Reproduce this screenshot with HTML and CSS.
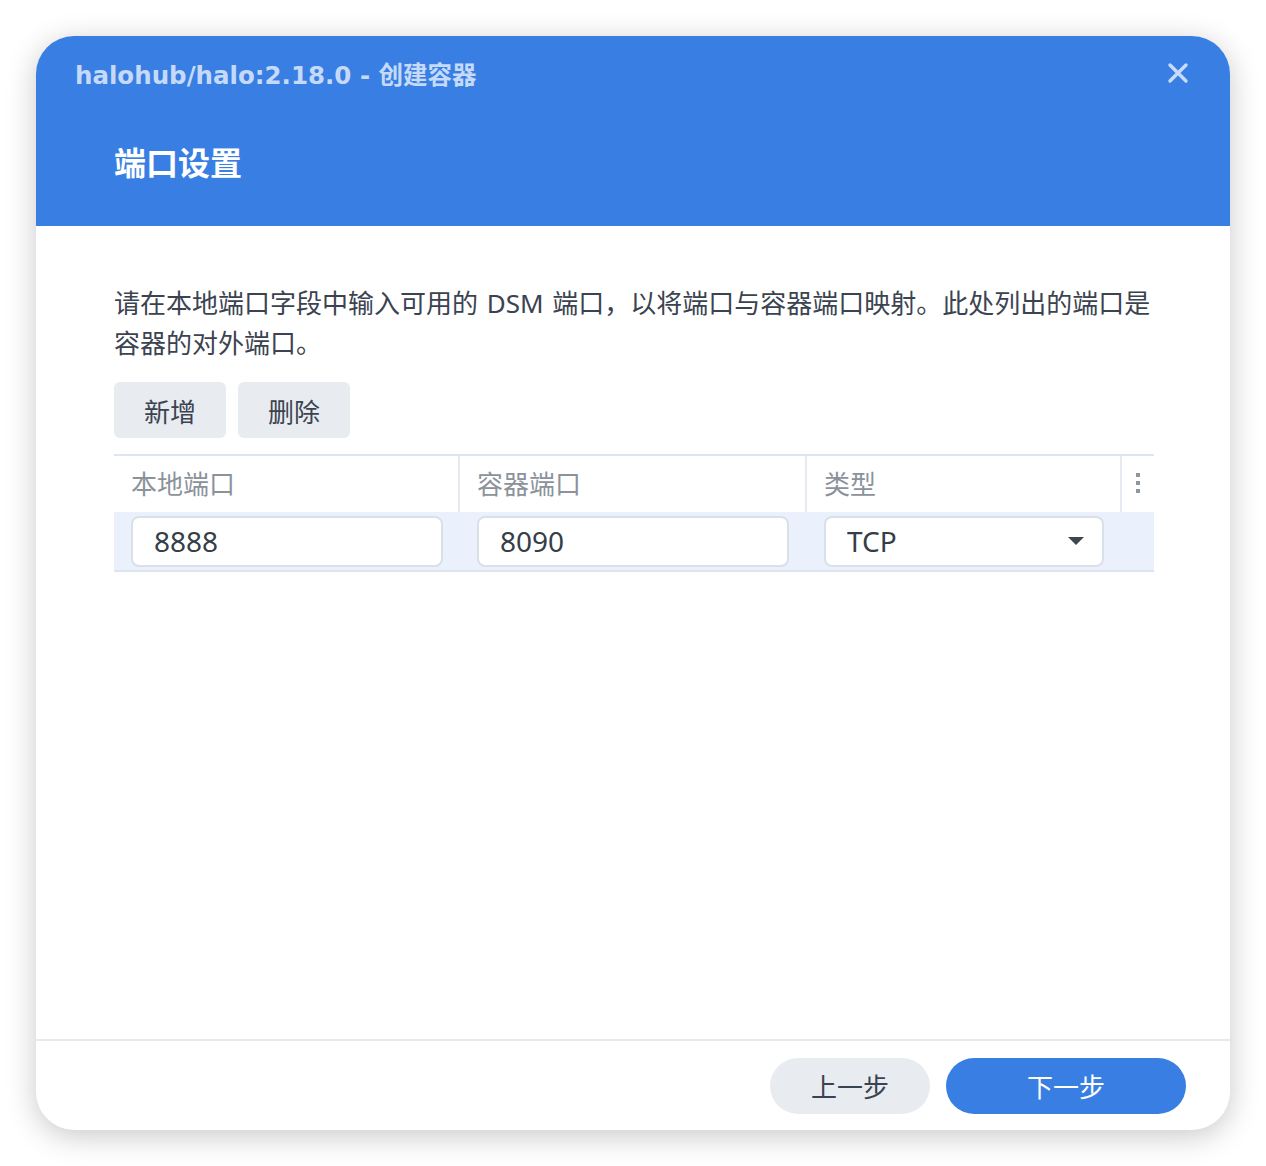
FILE: index.html
```html
<!DOCTYPE html>
<html lang="zh-CN">
<head>
  <meta charset="UTF-8">
  <title>创建容器</title>
  <link rel="stylesheet" href="styles.css">
</head>
<body>

  <div class="dialog">
    <div class="dialog-header">
      <div class="title-bar">
        <span class="title">halohub/halo:2.18.0 - 创建容器</span>
        <span class="close">
          <svg width="22" height="22" viewBox="0 0 22 22">
            <path d="M3 3 L19 19 M19 3 L3 19" stroke="#c8dcf8" stroke-width="3.4" stroke-linecap="round"/>
          </svg>
        </span>
      </div>
      <h1 class="step-title">端口设置</h1>
    </div>

    <div class="dialog-body">
      <p class="desc">请在本地端口字段中输入可用的 DSM 端口，以将端口与容器端口映射。此处列出的端口是容器的对外端口。</p>

      <div class="toolbar">
        <button class="tool-btn">新增</button>
        <button class="tool-btn">删除</button>
      </div>

      <div class="grid">
        <div class="grid-head">
          <div class="col col-local">本地端口</div>
          <div class="col col-container">容器端口</div>
          <div class="col col-type">类型</div>
          <div class="col col-menu">
            <span class="dots"><i></i><i></i><i></i></span>
          </div>
        </div>
        <div class="grid-row">
          <div class="col col-local"><div class="field">8888</div></div>
          <div class="col col-container"><div class="field">8090</div></div>
          <div class="col col-type">
            <div class="field select">TCP <span class="caret"></span></div>
          </div>
          <div class="col col-menu"></div>
        </div>
      </div>
    </div>

    <div class="dialog-footer">
      <button class="pill prev">上一步</button>
      <button class="pill next">下一步</button>
    </div>
  </div>

</body>
</html>
```

FILE: styles.css
```css
body {
  margin: 0;
  background: #fff;
  font-family: "Noto Sans", "Noto Sans CJK SC", sans-serif;
  color: #3b4350;
}

.dialog {
  margin: 36px;
  width: 1194px;
  height: 1094px;
  background: #fff;
  border-radius: 38px;
  box-shadow: 0 6px 30px rgba(0, 0, 0, 0.22);
  overflow: hidden;
  display: flex;
  flex-direction: column;
}

/* Header */
.dialog-header {
  background: #397fe3;
  height: 190px;
  box-sizing: border-box;
  padding: 17px 41px 0 39px;
}

.title-bar {
  display: flex;
  justify-content: space-between;
  align-items: center;
  height: 40px;
}

.title {
  font-family: "DejaVu Sans", "Noto Sans CJK SC", sans-serif;
  font-weight: bold;
  font-size: 24.5px;
  color: #c5daf8;
}

.close {
  display: flex;
}

.step-title {
  margin: 48px 0 0 39px;
  font-family: "Noto Sans CJK SC", sans-serif;
  font-size: 32px;
  font-weight: bold;
  color: #fff;
  line-height: 40px;
}

/* Body */
.dialog-body {
  flex: 1;
  padding: 57px 76px 0 78px;
}

.desc {
  margin: 0;
  font-size: 26px;
  line-height: 40px;
  word-spacing: 2px;
  color: #3b4350;
}

.toolbar {
  display: flex;
  gap: 12px;
  margin-top: 19px;
}

.tool-btn {
  width: 112px;
  height: 56px;
  border: none;
  border-radius: 6px;
  background: #e8ecf0;
  font-family: "Noto Sans CJK SC", sans-serif;
  font-size: 26px;
  color: #3b4350;
}

.grid {
  margin-top: 16px;
  border-top: 2px solid #dfe5ec;
}

.grid-head, .grid-row {
  display: flex;
}

.grid-head {
  height: 56px;
}

.grid-head .col {
  display: flex;
  align-items: center;
  padding-left: 17px;
  padding-bottom: 2px;
  font-size: 26px;
  color: #8b929a;
  border-right: 2px solid #e5eaf0;
  box-sizing: border-box;
}

.grid-head .col-menu {
  border-right: none;
  justify-content: center;
  padding-left: 0;
}

.col-local { width: 346px; }
.col-container { width: 347px; }
.col-type { width: 315px; }
.col-menu { width: 32px; }

.dots {
  display: flex;
  flex-direction: column;
  gap: 4px;
}

.dots i {
  width: 4px;
  height: 4px;
  background: #8f959c;
}

.grid-row {
  height: 60px;
  background: #eaf1fc;
  border-bottom: 2px solid #dde4ee;
  box-sizing: border-box;
}

.grid-row .col {
  display: flex;
  align-items: center;
  padding-left: 17px;
  box-sizing: border-box;
}

.field {
  width: 312px;
  height: 51px;
  box-sizing: border-box;
  background: #fff;
  border: 2px solid #d9e0e8;
  border-radius: 8px;
  padding-left: 21px;
  display: flex;
  align-items: center;
  font-size: 28px;
  color: #353d47;
}

.col-type .field {
  width: 280px;
}

.select {
  justify-content: space-between;
  padding-right: 18px;
}

.caret {
  width: 0;
  height: 0;
  border-left: 8px solid transparent;
  border-right: 8px solid transparent;
  border-top: 8px solid #3f4650;
}

/* Footer */
.dialog-footer {
  height: 91px;
  border-top: 2px solid #e6eaef;
  box-sizing: border-box;
  display: flex;
  justify-content: flex-end;
  align-items: center;
  gap: 16px;
  padding-right: 44px;
}

.pill {
  height: 56px;
  border: none;
  border-radius: 28px;
  font-family: "Noto Sans CJK SC", sans-serif;
  font-size: 26px;
}

.prev {
  width: 160px;
  background: #e8ecf0;
  color: #3b4350;
}

.next {
  width: 240px;
  background: #397fe3;
  color: #fff;
}
```
